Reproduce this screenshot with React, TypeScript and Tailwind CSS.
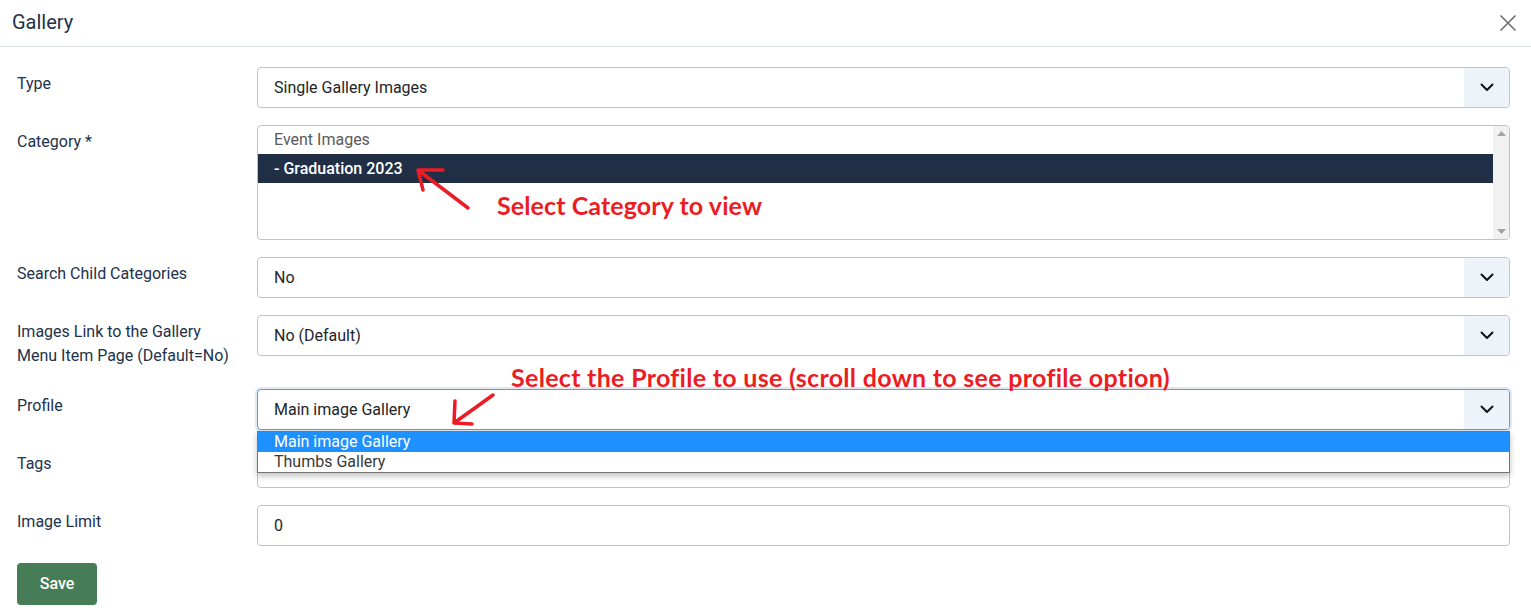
import React from "react";

const labelCls = "w-[240px] shrink-0 pt-[5px] pb-[4px] text-[16px] leading-6 text-[#22324b]";
const boxCls = "h-[41px] border border-[#b7c5da] rounded-[4px] bg-white flex items-center";

function Chevron() {
  return (
    <svg width="14" height="9" viewBox="0 0 14 9" fill="none">
      <path d="M1.5 1.5 L7 7 L12.5 1.5" stroke="#111" strokeWidth="2" strokeLinecap="round" strokeLinejoin="round" />
    </svg>
  );
}

function Select({ value, focused = false }: { value: string; focused?: boolean }) {
  return (
    <div
      className={
        focused
          ? "h-[41px] border border-[#5a9be3] rounded-[4px] bg-white flex items-stretch shadow-[0_0_0_2px_rgba(190,205,225,0.45)] overflow-hidden"
          : "h-[41px] border border-[#b7c5da] rounded-[4px] bg-white flex items-stretch overflow-hidden"
      }
    >
      <div className="flex-1 flex items-center pl-4 text-[16px] text-[#22262a]">{value}</div>
      <div className="w-[45px] bg-[#eef3f9] flex items-center justify-center">
        <Chevron />
      </div>
    </div>
  );
}

function Row({ label, children }: { label: React.ReactNode; children: React.ReactNode }) {
  return (
    <div className="flex">
      <div className={labelCls}>{label}</div>
      <div className="flex-1 relative">{children}</div>
    </div>
  );
}

export default function App() {
  return (
    <div className="w-[1531px] h-[611px] bg-white relative overflow-hidden font-['Roboto',sans-serif]">
      {/* header */}
      <div className="h-[47px] border-b border-[#dde2e8] flex items-center justify-between pl-3 pr-[14px]">
        <span className="text-[20px] leading-none pb-[3px] text-[#22324b]">Gallery</span>
        <svg width="18" height="18" viewBox="0 0 18 18" fill="none">
          <path d="M1.5 1.5 L16.5 16.5 M16.5 1.5 L1.5 16.5" stroke="#6f6f6f" strokeWidth="1.6" />
        </svg>
      </div>

      {/* form */}
      <div className="pt-[20px] pl-[17px] pr-[21px] flex flex-col gap-[17px]">
        <Row label="Type">
          <Select value="Single Gallery Images" />
        </Row>

        <Row label="Category *">
          <div className="h-[115px] border border-[#b7c5da] rounded-[4px] bg-white flex overflow-hidden">
            <div className="flex-1 text-[16px]">
              <div className="h-[28px] flex items-center pl-4 text-[#5a5a5a]">Event Images</div>
              <div className="h-[29px] flex items-center pl-4 bg-[#212f46] text-white font-medium">- Graduation 2023</div>
            </div>
            <div className="w-[16px] bg-[#f1f1f1] flex flex-col items-center justify-between py-[5px]">
              <svg width="9" height="5" viewBox="0 0 9 5"><path d="M0 5 L4.5 0 L9 5 Z" fill="#a3a3a3" /></svg>
              <svg width="9" height="5" viewBox="0 0 9 5"><path d="M0 0 L4.5 5 L9 0 Z" fill="#a3a3a3" /></svg>
            </div>
          </div>
        </Row>

        <Row label="Search Child Categories">
          <Select value="No" />
        </Row>

        <Row
          label={
            <>
              Images Link to the Gallery
              <br />
              Menu Item Page (Default=No)
            </>
          }
        >
          <Select value="No (Default)" />
        </Row>

        <Row label="Profile">
          <Select value="Main image Gallery" focused />
          <div className="absolute left-0 right-0 top-[42px] z-10 bg-white border border-[#767676] shadow-[0_3px_6px_rgba(0,0,0,0.25)] text-[16px]">
            <div className="h-[20px] flex items-center pl-4 bg-[#1e90ff] text-white">Main image Gallery</div>
            <div className="h-[20px] flex items-center pl-4 text-[#3a3a3a]">Thumbs Gallery</div>
          </div>
        </Row>

        <Row label="Tags">
          <div className={boxCls} />
        </Row>

        <Row label="Image Limit">
          <div className={boxCls}>
            <span className="pl-4 text-[16px] text-[#22262a]">0</span>
          </div>
        </Row>

        <div>
          <button className="w-[80px] h-[42px] rounded-[4px] bg-[#467c56] text-white text-[16px] font-medium">Save</button>
        </div>
      </div>

      {/* annotations */}
      <svg className="absolute left-0 top-0 pointer-events-none z-20" width="1531" height="611">
        <g stroke="#ec1c24" strokeWidth="3.5" strokeLinecap="round" fill="none">
          <path d="M468 208 L418 170 M418 170 L443 170 M418 170 L423 190" />
          <path d="M493 395 L454 423 M454 423 L455 401 M454 423 L472 424" />
        </g>
      </svg>
      <div className="absolute left-[497px] top-[190px] z-20 text-[25px] leading-[30px] tracking-[0.1px] font-bold text-[#ec1c24] font-['Lato',sans-serif]">
        Select Category to view
      </div>
      <div className="absolute left-[511px] top-[362px] z-20 text-[25px] leading-[30px] tracking-[0.3px] font-bold text-[#ec1c24] font-['Lato',sans-serif]">
        Select the Profile to use (scroll down to see profile option)
      </div>
    </div>
  );
}
